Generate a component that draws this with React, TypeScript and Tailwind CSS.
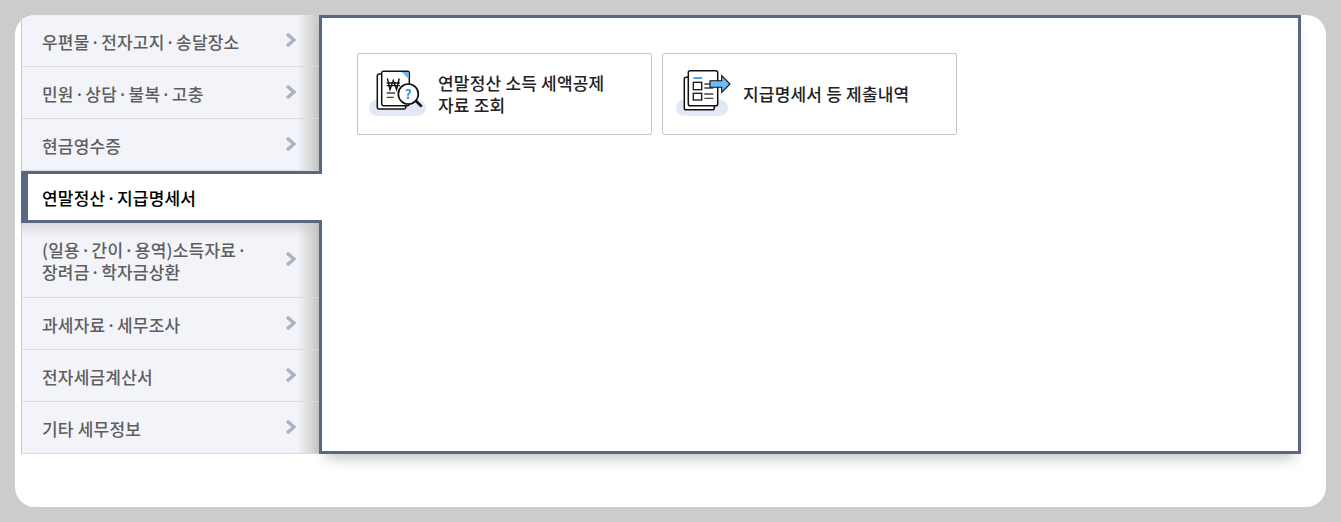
import React from 'react';

const font = { fontFamily: '"Noto Sans CJK KR", "Noto Sans", sans-serif' };

const menuItems = [
  { label: '우편물 · 전자고지 · 송달장소', rowClass: 'h-[52px] pt-[2px]' },
  { label: '민원 · 상담 · 불복 · 고충', rowClass: 'h-[52px] pt-[2px]' },
  { label: '현금영수증', rowClass: 'h-[52px] pt-[2px]' },
  { label: '연말정산 · 지급명세서', rowClass: 'h-[52px]', active: true },
  { label: '(일용 · 간이 · 용역)소득자료 ·\n장려금 · 학자금상환', rowClass: 'h-[75px] pt-[2px]', underActive: true },
  { label: '과세자료 · 세무조사', rowClass: 'h-[52px] pt-[2px]' },
  { label: '전자세금계산서', rowClass: 'h-[52px] pt-[2px]' },
  { label: '기타 세무정보', rowClass: 'h-[52px] pt-[2px]' },
];

const Chevron = () => (
  <svg width="12" height="14" viewBox="0 0 12 14" className="absolute right-[25px] top-1/2 -mt-[1px] -translate-y-1/2">
    <path d="M2 1 L9 7 L2 13" fill="none" stroke="#aeb2c0" strokeWidth="3.4" />
  </svg>
);

const SearchDocIcon = () => (
  <svg width="60" height="50" viewBox="0 0 60 50">
    <rect x="1" y="31" width="57" height="15.7" rx="7.8" fill="#e2e8f5" />
    <path d="M13 5 h-2 a1.7 1.7 0 0 0 -1.7 1.7 v31.6 a1.7 1.7 0 0 0 1.7 1.7 h25 a1.7 1.7 0 0 0 1.7 -1.7 v-1.6" fill="#fff" stroke="#111" strokeWidth="1.5" />
    <path d="M13.7 4 a1.7 1.7 0 0 1 1.7 -1.7 h24.2 a1.7 1.7 0 0 1 1.7 1.7 v31 a1.7 1.7 0 0 1 -1.7 1.7 h-24.2 a1.7 1.7 0 0 1 -1.7 -1.7 z" fill="#fff" stroke="#111" strokeWidth="1.5" />
    <path d="M33.7 3 h5.9 a1 1 0 0 1 1 1 v6 z" fill="#69b7ee" />
    <path d="M19.4 9.5 l2.6 11 l3.3 -9 l3.3 9 l2.6 -11 M18.7 14 h13.2 M18.7 16.6 h13.2" fill="none" stroke="#111" strokeWidth="1.4" />
    <path d="M18.7 24 h8.5 M18.7 28.3 h7" stroke="#444" strokeWidth="1.3" />
    <path d="M47.5 31.5 l6.2 6.2" stroke="#111" strokeWidth="2.6" />
    <circle cx="40.3" cy="25" r="10" fill="#fff" stroke="#111" strokeWidth="1.7" />
    <text x="40.3" y="30" textAnchor="middle" fontSize="13" fontWeight="700" fill="#2d8fe0" style={font}>?</text>
  </svg>
);

const ReportIcon = () => (
  <svg width="60" height="50" viewBox="0 0 60 50">
    <rect x="4" y="31" width="52" height="15.7" rx="7.8" fill="#e2e8f5" />
    <rect x="12.3" y="8.3" width="30" height="32.4" rx="1.8" fill="#fff" stroke="#111" strokeWidth="1.5" />
    <rect x="16.3" y="1.7" width="29.4" height="35" rx="1.8" fill="#fff" stroke="#111" strokeWidth="1.5" />
    <path d="M21.3 9 h9" stroke="#1f86d0" strokeWidth="1.6" />
    <rect x="21.3" y="13.3" width="8.4" height="7.4" fill="#fff" stroke="#111" strokeWidth="1.3" />
    <rect x="21.3" y="24.3" width="8.4" height="6.7" fill="#fff" stroke="#111" strokeWidth="1.3" />
    <path d="M32.3 15 h9 M32.3 19 h9 M32.3 25 h9 M32.3 29.3 h9" stroke="#444" strokeWidth="1.3" />
    <path d="M38 11.7 h11.7 v-5 l8.3 8.3 l-8.3 8.3 v-5 h-11.7 z" fill="#6cbcf5" stroke="#111" strokeWidth="1.1" />
  </svg>
);

export default function App() {
  return (
    <div className="w-[1341px] h-[522px] bg-[#cccccc] p-[15px]" style={font}>
      <div className="w-[1311px] h-[492px] bg-white rounded-[20px] pl-[6px] flex items-start overflow-hidden">
        <ul className="w-[301px] shrink-0 flex flex-col">
          {menuItems.map((item) =>
            item.active ? (
              <li
                key={item.label}
                className="relative z-20 h-[52px] pt-[2px] flex items-center bg-white border-y-[3px] border-l-[7px] border-[#5a6781] pl-[14px] text-[17px] font-medium tracking-[0.2px] [word-spacing:-3.2px] text-black"
              >
                {item.label}
              </li>
            ) : (
              <li
                key={item.label}
                className={`relative ${item.rowClass} flex items-center bg-[#f3f4fa] border-l border-b border-l-[#c9c9c9] border-b-[#dcdcde] pl-[20px] text-[17px] leading-[22px] font-medium tracking-[0.2px] text-[#5e5e5e] whitespace-pre-line ${item.label.includes('·') ? '[word-spacing:-3.2px]' : ''}`}
              >
                {item.underActive && (
                  <span className="absolute inset-x-0 top-0 h-[14px] bg-gradient-to-b from-black/10 to-transparent" />
                )}
                <span className="absolute inset-y-0 right-[3px] w-[22px] bg-gradient-to-r from-transparent to-[#c8c8c8]" />
                <span className="relative">{item.label}</span>
                <Chevron />
              </li>
            )
          )}
        </ul>
        <main className="relative z-10 -ml-[3px] w-[982px] h-[439px] bg-white border-[3px] border-[#5a6781] shadow-[0_10px_14px_-7px_rgba(0,0,0,0.28)] pt-[35px] pl-[35px] flex items-start gap-[10px]">
          <a className="w-[295px] h-[82px] flex items-center gap-[10px] pl-[10px] rounded-[2px] border border-[#c4c4c4] text-[17px] leading-[22px] font-medium tracking-[0.2px] text-[#222222]">
            <span className="shrink-0 flex"><SearchDocIcon /></span>
            <span className="w-[180px]">연말정산 소득 세액공제 자료 조회</span>
          </a>
          <a className="w-[295px] h-[82px] flex items-center gap-[11px] pl-[9px] rounded-[2px] border border-[#c4c4c4] text-[17px] leading-[22px] font-medium tracking-[0.2px] text-[#222222]">
            <span className="shrink-0 flex"><ReportIcon /></span>
            <span>지급명세서 등 제출내역</span>
          </a>
        </main>
      </div>
    </div>
  );
}
